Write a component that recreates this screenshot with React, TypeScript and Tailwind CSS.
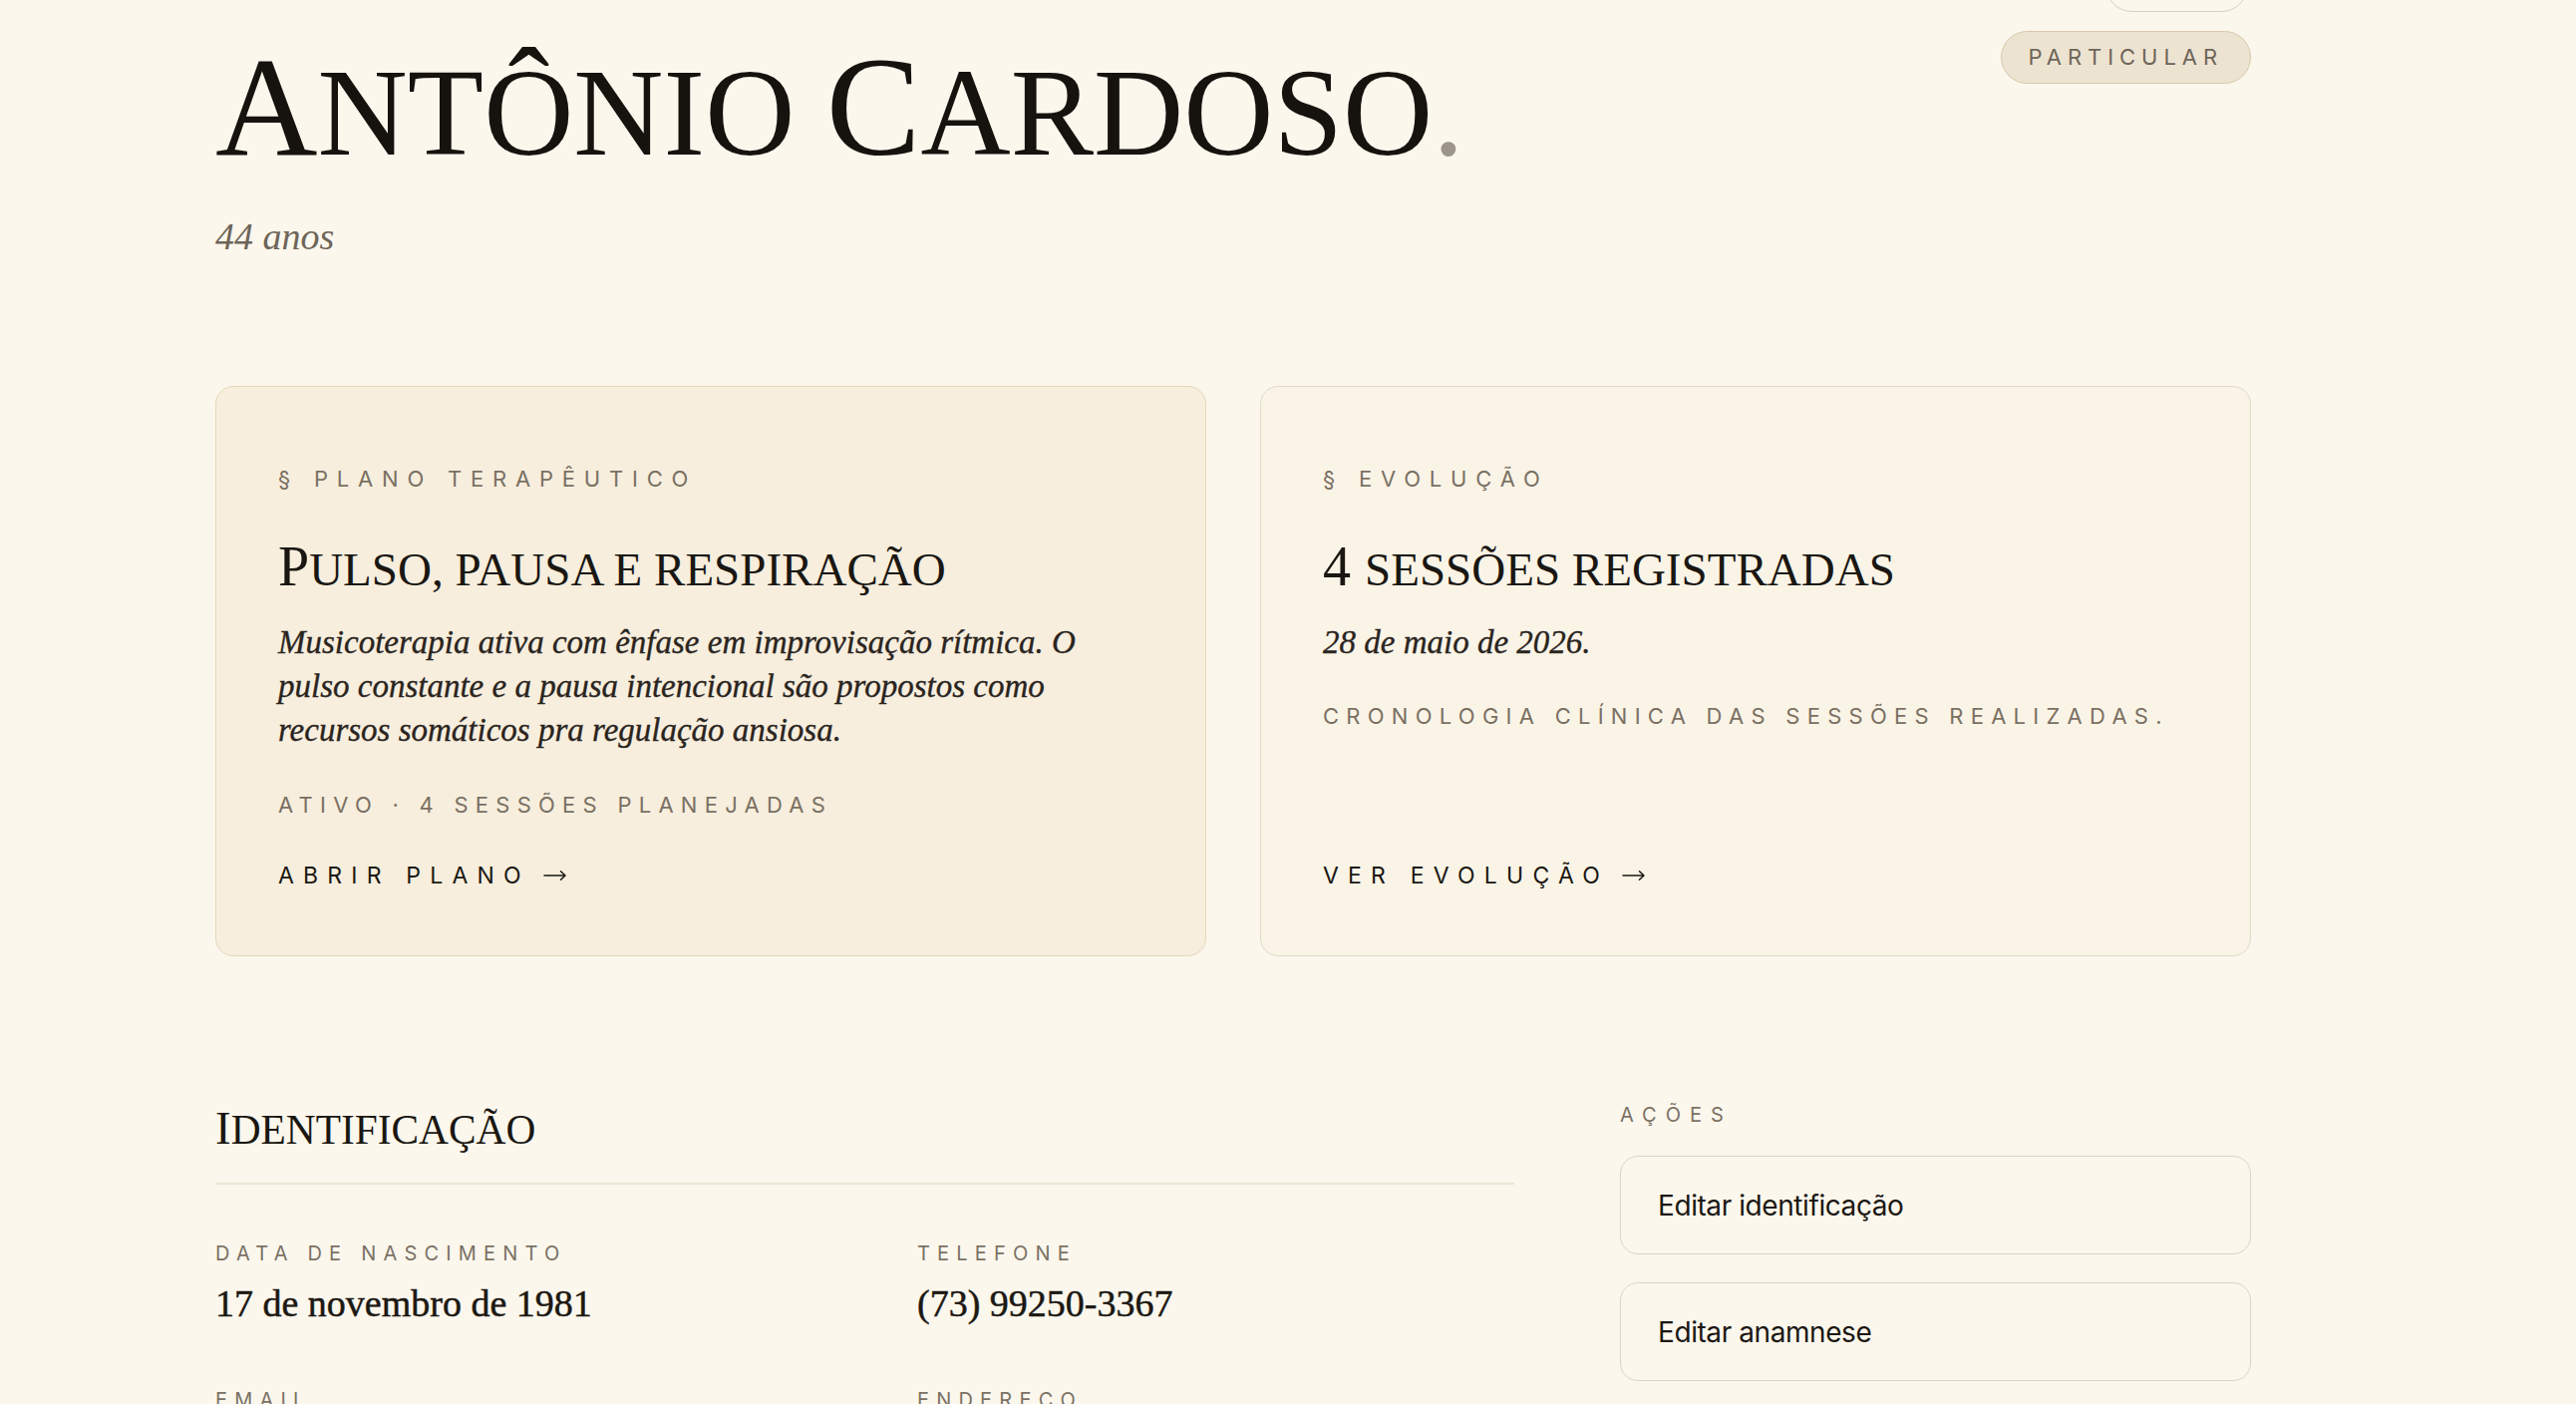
import React from "react";

const serif = "font-['Liberation_Serif','DejaVu_Serif',serif]";
const sans = "font-['Inter','Liberation_Sans',sans-serif]";

function SC({ text, small }: { text: string; small: string }) {
  const parts: { s: string; low: boolean }[] = [];
  for (const ch of text) {
    const isLetter = ch.toUpperCase() !== ch.toLowerCase();
    const isDigit = /[0-9]/.test(ch);
    const last = parts[parts.length - 1];
    if (!isLetter && !isDigit && last) {
      last.s += ch;
      continue;
    }
    const low = isLetter && ch !== ch.toUpperCase();
    if (last && last.low === low) last.s += ch;
    else parts.push({ s: ch, low });
  }
  return (
    <>
      {parts.map((p, i) =>
        p.low ? (
          <span key={i} className={small}>
            {p.s.toUpperCase()}
          </span>
        ) : (
          <span key={i}>{p.s}</span>
        )
      )}
    </>
  );
}

function Arrow() {
  return (
    <svg width="24" height="12" viewBox="0 0 24 12" className="-ml-[3px] inline-block align-middle -mt-[3px]">
      <path d="M1 6h21M17.5 1.8L22 6l-4.5 4.2" stroke="currentColor" strokeWidth="1.5" fill="none" strokeLinecap="round" strokeLinejoin="round" />
    </svg>
  );
}

function Field({ label, value }: { label: string; value: string }) {
  return (
    <div>
      <div className={`${sans} text-[20px] leading-[28px] tracking-[0.36em] text-[#7a7164]`}>{label}</div>
      <div className={`${serif} mt-[12px] text-[38px] leading-[48px] text-[#1c1812] [-webkit-text-stroke:0.5px_#1c1812]`}>
        {value}
      </div>
    </div>
  );
}

export default function App() {
  return (
    <div className="min-h-screen overflow-hidden bg-[#fbf7ed]">
      <div className="ml-[216px] w-[2042px]">
        {/* Header */}
        <div className="flex items-start justify-between">
          <h1 className={`${serif} mt-[36px] whitespace-nowrap text-[142px] leading-[142px] font-normal text-[#16130e]`}>
            <SC text="Antônio Cardoso" small="text-[0.88em] leading-none" />
            <span className="text-[0.88em] leading-none text-[#9b958b]">.</span>
          </h1>
          <div className="-mt-[41px] flex flex-col items-end gap-[19px]">
            <div className="mr-[3px] h-[53px] w-[143px] rounded-full border-[1.5px] border-[#d8d0c1]" />
            <span
              className={`${sans} flex h-[53px] items-center rounded-full border-[1.5px] border-[#d8c8ab] bg-[#ede3d1] pl-[27px] pr-[27px] text-[22px] tracking-[0.27em] text-[#6e6559]`}
            >
              PARTICULAR
            </span>
          </div>
        </div>
        <div className={`${serif} mt-[37px] text-[38px] leading-[44px] italic text-[#6e6558]`}>44 anos</div>

        {/* Cards */}
        <div className="mt-[128px] grid grid-cols-2 gap-[54px]">
          <div className="flex flex-col rounded-[18px] border-[1.5px] border-[#e6d6bb] bg-[#f7eedd] pb-[64px] pl-[62px] pr-[62px] pt-[77px]">
            <div className={`${sans} text-[22px] leading-[30px] tracking-[0.4em] text-[#7a7063]`}>§ PLANO TERAPÊUTICO</div>
            <h3 className={`${serif} mt-[41px] whitespace-nowrap text-[56px] leading-[64px] font-normal text-[#1a1712]`}>
              <SC text="Pulso, pausa e respiração" small="text-[0.84em] leading-none" />
            </h3>
            <p className={`${serif} mt-[22px] text-[33px] leading-[44px] italic text-[#2a241e] [-webkit-text-stroke:0.35px_#2a241e]`}>
              <span className="block whitespace-nowrap">Musicoterapia ativa com ênfase em improvisação rítmica. O</span>
              <span className="block whitespace-nowrap">pulso constante e a pausa intencional são propostos como</span>
              <span className="block whitespace-nowrap">recursos somáticos pra regulação ansiosa.</span>
            </p>
            <div className={`${sans} mt-[38px] text-[22px] leading-[30px] tracking-[0.33em] text-[#7a7063]`}>ATIVO · 4 SESSÕES PLANEJADAS</div>
            <div className={`${sans} mt-[40px] text-[23px] leading-[32px] tracking-[0.4em] text-[#1a1712]`}>
              ABRIR PLANO <Arrow />
            </div>
          </div>

          <div className="flex flex-col rounded-[18px] border-[1.5px] border-[#e0d9cc] bg-[#faf4e7] pb-[64px] pl-[62px] pr-[62px] pt-[77px]">
            <div className={`${sans} text-[22px] leading-[30px] tracking-[0.4em] text-[#7a7063]`}>§ EVOLUÇÃO</div>
            <h3 className={`${serif} mt-[41px] whitespace-nowrap text-[56px] leading-[64px] font-normal text-[#1a1712]`}>
              <SC text="4 sessões registradas" small="text-[0.84em] leading-none" />
            </h3>
            <p className={`${serif} mt-[22px] text-[33px] leading-[44px] italic text-[#2a241e] [-webkit-text-stroke:0.35px_#2a241e]`}>
              28 de maio de 2026.
            </p>
            <div className={`${sans} mt-[37px] text-[22px] leading-[30px] tracking-[0.33em] text-[#7a7063]`}>
              CRONOLOGIA CLÍNICA DAS SESSÕES REALIZADAS.
            </div>
            <div className={`${sans} mt-auto text-[23px] leading-[32px] tracking-[0.4em] text-[#1a1712]`}>
              VER EVOLUÇÃO <Arrow />
            </div>
          </div>
        </div>

        {/* Bottom section */}
        <div className="mt-[145px] grid grid-cols-[1303px_633px] gap-x-[106px]">
          <div>
            <h2 className={`${serif} border-b-2 border-[#ede4d4] pb-[28px] text-[47px] leading-[54px] font-normal text-[#1a1712]`}>
              <SC text="Identificação" small="text-[0.88em] leading-none" />
            </h2>
            <div className="mt-[55px] grid grid-cols-[599px_1fr] gap-x-[105px] gap-y-[59px]">
              <Field label="DATA DE NASCIMENTO" value="17 de novembro de 1981" />
              <Field label="TELEFONE" value="(73) 99250-3367" />
              <Field label="EMAIL" value="—" />
              <Field label="ENDEREÇO" value="—" />
            </div>
          </div>
          <div>
            <div className={`${sans} text-[20px] leading-[28px] tracking-[0.45em] text-[#7a7164]`}>AÇÕES</div>
            <div className="mt-[27px] flex flex-col gap-[28px]">
              <button
                className={`${sans} flex h-[99px] items-center rounded-[18px] border-[1.5px] border-[#dcd5c7] bg-transparent px-[37px] text-left text-[28px] tracking-[-0.015em] text-[#1c1812]`}
              >
                Editar identificação
              </button>
              <button
                className={`${sans} flex h-[99px] items-center rounded-[18px] border-[1.5px] border-[#dcd5c7] bg-transparent px-[37px] text-left text-[28px] tracking-[-0.015em] text-[#1c1812]`}
              >
                Editar anamnese
              </button>
            </div>
          </div>
        </div>
      </div>
    </div>
  );
}
